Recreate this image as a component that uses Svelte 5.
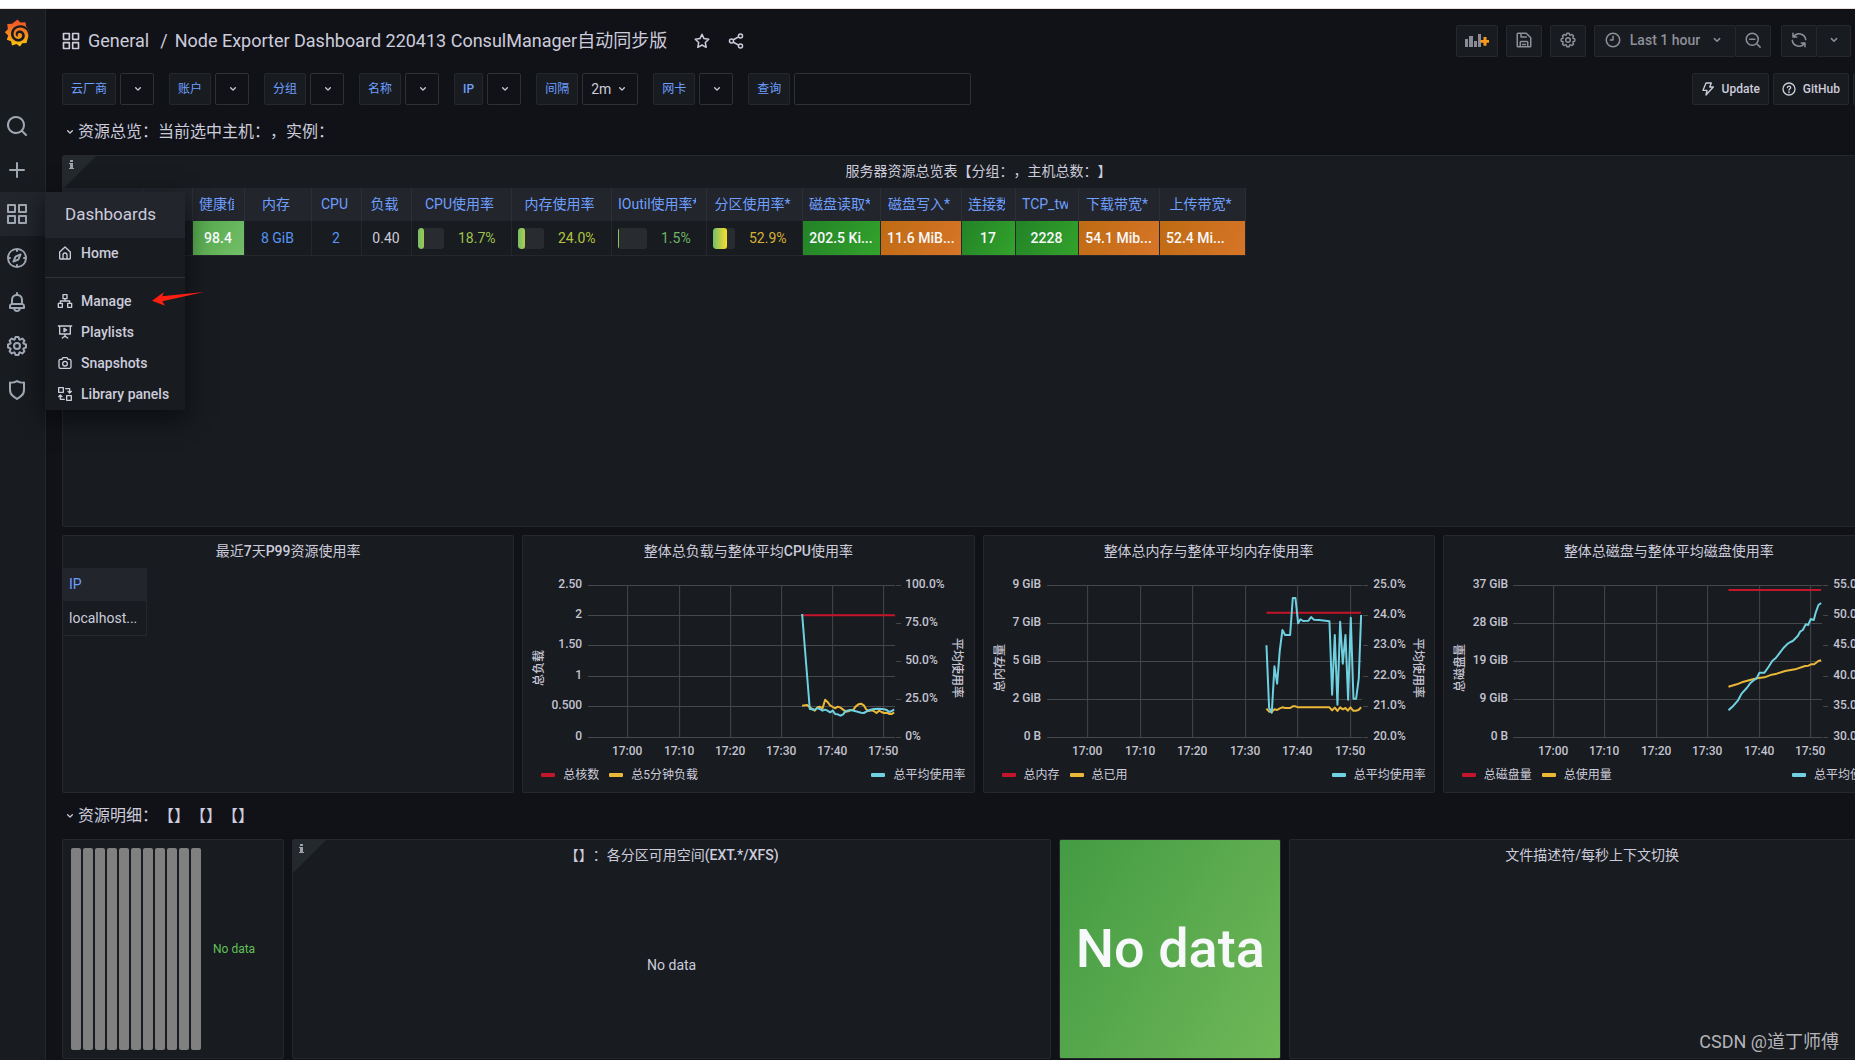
<script lang="ts">
  const icons: Record<string, string> = {
    search: 'M21.71,20.29,18,16.61A9,9,0,1,0,16.61,18l3.68,3.68a1,1,0,0,0,1.42,0A1,1,0,0,0,21.71,20.29ZM11,18a7,7,0,1,1,7-7A7,7,0,0,1,11,18Z',
    plus: 'M19,11H13V5a1,1,0,0,0-2,0v6H5a1,1,0,0,0,0,2h6v6a1,1,0,0,0,2,0V13h6a1,1,0,0,0,0-2Z',
    apps: 'M10,13H3a1,1,0,0,0-1,1v7a1,1,0,0,0,1,1h7a1,1,0,0,0,1-1V14A1,1,0,0,0,10,13ZM9,20H4V15H9ZM21,2H14a1,1,0,0,0-1,1v7a1,1,0,0,0,1,1h7a1,1,0,0,0,1-1V3A1,1,0,0,0,21,2ZM20,9H15V4h5Zm1,4H14a1,1,0,0,0-1,1v7a1,1,0,0,0,1,1h7a1,1,0,0,0,1-1V14A1,1,0,0,0,21,13Zm-1,7H15V15h5ZM10,2H3A1,1,0,0,0,2,3v7a1,1,0,0,0,1,1h7a1,1,0,0,0,1-1V3A1,1,0,0,0,10,2ZM9,9H4V4H9Z',
    compass: 'M12,2A10,10,0,1,0,22,12,10,10,0,0,0,12,2Zm1,17.93V19a1,1,0,0,0-2,0v.93A8,8,0,0,1,4.07,13H5a1,1,0,0,0,0-2H4.07A8,8,0,0,1,11,4.07V5a1,1,0,0,0,2,0V4.07A8,8,0,0,1,19.93,11H19a1,1,0,0,0,0,2h.93A8,8,0,0,1,13,19.93ZM15.14,7.55l-5,2.12a1,1,0,0,0-.52.52l-2.12,5a1,1,0,0,0,.21,1.1,1,1,0,0,0,.7.3.93.93,0,0,0,.4-.09l5-2.12a1,1,0,0,0,.52-.52l2.12-5a1,1,0,0,0-1.31-1.31Zm-2.49,5.1-2.28,1,1-2.28,2.28-1Z',
    bell: 'M18,13.18V10a6,6,0,0,0-5-5.91V3a1,1,0,0,0-2,0V4.09A6,6,0,0,0,6,10v3.18A3,3,0,0,0,4,16v2a1,1,0,0,0,1,1H8.14a4,4,0,0,0,7.72,0H19a1,1,0,0,0,1-1V16A3,3,0,0,0,18,13.18ZM8,10a4,4,0,0,1,8,0v3H8Zm4,10a2,2,0,0,1-1.72-1h3.44A2,2,0,0,1,12,20Zm6-3H6V16a1,1,0,0,1,1-1H17a1,1,0,0,1,1,1Z',
    cog: 'M21.32,9.55l-1.89-.63.89-1.78A1,1,0,0,0,20.13,6L18,3.87a1,1,0,0,0-1.15-.19l-1.78.89-.63-1.89A1,1,0,0,0,13.5,2h-3a1,1,0,0,0-.95.68L8.92,4.57,7.14,3.68A1,1,0,0,0,6,3.87L3.87,6a1,1,0,0,0-.19,1.15l.89,1.78-1.89.63A1,1,0,0,0,2,10.5v3a1,1,0,0,0,.68.95l1.89.63-.89,1.78A1,1,0,0,0,3.87,18L6,20.13a1,1,0,0,0,1.15.19l1.78-.89.63,1.89a1,1,0,0,0,.95.68h3a1,1,0,0,0,.95-.68l.63-1.89,1.78.89A1,1,0,0,0,18,20.13L20.13,18a1,1,0,0,0,.19-1.15l-.89-1.78,1.89-.63A1,1,0,0,0,22,13.5v-3A1,1,0,0,0,21.32,9.55ZM20,12.78l-1.2.4A2,2,0,0,0,17.64,16l.57,1.14-1.1,1.1L16,17.64a2,2,0,0,0-2.79,1.16l-.4,1.2H11.22l-.4-1.2A2,2,0,0,0,8,17.64l-1.14.57-1.1-1.1L6.36,16A2,2,0,0,0,5.2,13.18L4,12.78V11.22l1.2-.4A2,2,0,0,0,6.36,8L5.79,6.89l1.1-1.1L8,6.36A2,2,0,0,0,10.82,5.2l.4-1.2h1.56l.4,1.2A2,2,0,0,0,16,6.36l1.14-.57,1.1,1.1L17.64,8a2,2,0,0,0,1.16,2.79l1.2.4ZM12,8a4,4,0,1,0,4,4A4,4,0,0,0,12,8Zm0,6a2,2,0,1,1,2-2A2,2,0,0,1,12,14Z',
    shield: 'M19.63,3.65a1,1,0,0,0-.84-.2,8,8,0,0,1-6.22-1.27,1,1,0,0,0-1.14,0A8,8,0,0,1,5.21,3.45a1,1,0,0,0-.84.2A1,1,0,0,0,4,4.43v7.45a9,9,0,0,0,3.77,7.33l3.65,2.6a1,1,0,0,0,1.16,0l3.65-2.6A9,9,0,0,0,20,11.88V4.43A1,1,0,0,0,19.63,3.65ZM18,11.88a7,7,0,0,1-2.93,5.7L12,19.77,8.93,17.58A7,7,0,0,1,6,11.88V5.58a10,10,0,0,0,6-1.39,10,10,0,0,0,6,1.39Z'
  };

  const lineIcons: Record<string, string> = {
    down: 'M8.500 10.200l3.500 3.500 3.500-3.500',
    star: 'M12 3l2.7 5.8 6.3.8-4.6 4.4 1.2 6.4L12 17.3l-5.6 3.1L7.6 14 3 9.600l6.300-.8z',
    share: 'M15.400 6.400L8.600 10.300M8.600 13.700l6.800 3.900M18 2.500a2.700 2.700 0 1 1 0 5.400 2.700 2.700 0 0 1 0-5.400zM6 9.300a2.700 2.700 0 1 1 0 5.400 2.700 2.700 0 0 1 0-5.400zM18 16a2.700 2.700 0 1 1 0 5.400A2.700 2.700 0 0 1 18 16z',
    save: 'M4 3h11l6 6v11a1 1 0 0 1-1 1H4a1 1 0 0 1-1-1V4a1 1 0 0 1 1-1zM8 3v5h7M7 21v-6a1 1 0 0 1 1-1h8a1 1 0 0 1 1 1v6M10 18h4',
    clock: 'M12 3a9 9 0 1 1 0 18 9 9 0 0 1 0-18zM12 7v5H8.500',
    zoomOut: 'M11 3a8 8 0 1 1 0 16 8 8 0 0 1 0-16zM17 17l4.500 4.500M7.500 11h7',
    sync: 'M4 3v5h5M20 21v-5h-5M4.500 8A9 9 0 0 1 21 11.500M19.500 16A9 9 0 0 1 3 12.500',
    bolt: 'M9 3h8l-2.500 6H20L9 21l1.500-7H4.500z',
    help: 'M12 3a9 9 0 1 1 0 18 9 9 0 0 1 0-18zM9.600 9.800c.3-3 4.900-2.900 4.900 0 0 1.800-2.500 1.700-2.500 3.700M12 16v1.500',
    home: 'M4 10.500L12 3l8 7.500V20a1 1 0 0 1-1 1H5a1 1 0 0 1-1-1zM9 21v-6a3 3 0 0 1 6 0v6',
    sitemap: 'M9 2.500h6v6H9zM2 15.500h6v6H2zM16 15.500h6v6h-6zM12 8.500V12M5 15.500V12h14v3.500',
    playlists: 'M2 3h20M4 3v12h16V3M12 15v4M8 21l4-3 4 3M10.500 6.500v5L14.500 9z',
    camera: 'M7.500 6.500L9 4h6l1.500 2.500H19a2 2 0 0 1 2 2V18a2 2 0 0 1-2 2H5a2 2 0 0 1-2-2V8.500a2 2 0 0 1 2-2zM12 9.500a3.500 3.500 0 1 1 0 7 3.500 3.500 0 0 1 0-7z',
    library: 'M2.500 2.500h7v7h-7zM14.500 14.500h7v7h-7zM13 4h6v6M16.500 8L19 10.500 21.500 8M11 20H5v-6M2.500 16L5 13.500 7.500 16'
  };

  const nav = [
    ['search', 'Search'], ['plus', 'Create'], ['apps', 'Dashboards'], ['compass', 'Explore'],
    ['bell', 'Alerting'], ['cog', 'Configuration'], ['shield', 'Server admin']
  ];
  const menu = [
    ['sitemap', 'Manage'], ['playlists', 'Playlists'], ['camera', 'Snapshots'], ['library', 'Library panels']
  ];
  const filters = [
    ['云厂商', ''], ['账户', ''], ['分组', ''], ['名称', ''], ['IP', ''], ['间隔', '2m'], ['网卡', '']
  ];

  type Col = { w: number; h: string; v: string; kind?: string; bar?: number; fill?: number };
  const columns: Col[] = [
    { w: 80, h: '', v: '' },
    { w: 50, h: '', v: '' },
    { w: 52, h: '健康值', v: '98.4', kind: 'solid light' },
    { w: 67, h: '内存', v: '8 GiB', kind: 'blue' },
    { w: 50, h: 'CPU', v: '2', kind: 'blue' },
    { w: 50, h: '负载', v: '0.40' },
    { w: 100, h: 'CPU使用率', v: '18.7%', kind: 'lime', bar: 26, fill: 6 },
    { w: 100, h: '内存使用率', v: '24.0%', kind: 'olive', bar: 26, fill: 7 },
    { w: 95, h: 'IOutil使用率*', v: '1.5%', kind: 'leaf', bar: 29, fill: 1 },
    { w: 96, h: '分区使用率*', v: '52.9%', kind: 'amber', bar: 22, fill: 14 },
    { w: 78, h: '磁盘读取*', v: '202.5 Ki...', kind: 'solid green' },
    { w: 81, h: '磁盘写入*', v: '11.6 MiB...', kind: 'solid orange' },
    { w: 54, h: '连接数', v: '17', kind: 'solid green' },
    { w: 63, h: 'TCP_tw', v: '2228', kind: 'solid green' },
    { w: 81, h: '下载带宽*', v: '54.1 Mib...', kind: 'solid orange' },
    { w: 86, h: '上传带宽*', v: '52.4 Mi...', kind: 'solid orange start' }
  ];

  const five = [17, 55, 93, 131, 169];
  const six = [17, 47, 77, 108, 138, 169];
  const times = ['17:00', '17:10', '17:20', '17:30', '17:40', '17:50'];

  // Series points are kept in thirds of a pixel, offset by each chart's origin.
  const charts = [
    {
      title: '整体总负载与整体平均CPU使用率',
      left: '总负载', x0: 65, x1: 372, labelX: 59, rightX: 382, ox: -8,
      ys: six, yl: ['2.50', '2', '1.50', '1', '0.500', '0'],
      rs: five, rl: ['100.0%', '75.0%', '50.0%', '25.0%', '0%'],
      xs: [104, 156, 207, 258, 309, 360],
      legend: ['总核数', '总5分钟负载'],
      red: '861,256 1139,256',
      yellow: '861,527 876,525 884,532 899,542 907,532 914,530 922,536 930,509 937,516 945,526 953,531 960,535 968,530 976,533 984,539 992,545 999,544 1007,540 1015,539 1022,529 1030,523 1038,521 1046,526 1053,538 1061,543 1069,541 1076,543 1084,549 1092,542 1099,546 1107,549 1115,548 1122,552 1130,552 1137,547',
      cyan: '861,252 884,537 899,539 907,534 914,537 922,542 930,539 937,542 945,547 953,542 960,552 968,553 976,557 984,553 992,543 1007,540 1022,544 1038,548 1046,549 1061,541 1076,537 1092,536 1107,538 1115,540 1122,546 1130,543 1137,538'
    },
    {
      title: '整体总内存与整体平均内存使用率',
      left: '总内存量', x0: 63, x1: 378, labelX: 57, rightX: 389, ox: -9,
      ys: five, yl: ['9 GiB', '7 GiB', '5 GiB', '2 GiB', '0 B'],
      rs: six, rl: ['25.0%', '24.0%', '23.0%', '22.0%', '21.0%', '20.0%'],
      xs: [103, 156, 208, 261, 313, 366],
      legend: ['总内存', '总已用'],
      red: '874,248 1158,248',
      yellow: '874,536 882,545 890,545 898,538 906,540 914,535 922,532 930,534 945,534 953,529 961,529 969,532 1063,532 1071,541 1079,533 1087,543 1095,532 1103,538 1111,534 1118,542 1126,532 1134,542 1142,542 1150,540 1158,532',
      cyan: '874,346 882,534 890,548 898,409 906,461 914,361 922,300 930,315 945,315 953,204 961,204 969,280 976,268 984,273 1000,272 1008,261 1016,269 1032,270 1063,274 1071,494 1079,315 1087,524 1095,275 1103,401 1111,315 1119,509 1127,263 1135,506 1143,506 1151,445 1158,255'
    },
    {
      title: '整体总磁盘与整体平均磁盘使用率',
      left: '总磁盘量', x0: 69, x1: 378, labelX: 64, rightX: 389, ox: -9,
      ys: five, yl: ['37 GiB', '28 GiB', '19 GiB', '9 GiB', '0 B'],
      rs: six, rl: ['55.0%', '50.0%', '45.0%', '40.0%', '35.0%', '30.0%'],
      xs: [109, 160, 212, 263, 315, 366],
      legend: ['总磁盘量', '总使用量'],
      red: '880,180 1158,180',
      yellow: '880,470 905,463 920,457 945,450 965,445 988,442 1010,434 1025,431 1050,423 1080,418 1110,408 1120,407 1128,403 1137,403 1150,393 1158,391',
      cyan: '880,541 895,527 908,512 920,490 935,474 945,460 957,450 964,446 973,428 988,428 1000,411 1012,392 1022,384 1035,367 1045,354 1058,341 1066,336 1073,333 1088,318 1095,305 1103,300 1112,283 1119,285 1127,267 1136,270 1142,247 1150,225 1158,219'
    }
  ];

  const runs = (text: string) => text.split(/([A-Za-z0-9.*()\/]+)/).filter(Boolean);
</script>

{#snippet icon(name: string, size: number)}
  <svg class="icon" width={size} height={size} viewBox="0 0 24 24" aria-hidden="true">
    {#if icons[name]}
      <path d={icons[name]} fill="currentColor" />
    {:else}
      <path d={lineIcons[name]} fill="none" stroke="currentColor" stroke-width="2" stroke-linejoin="round" stroke-linecap="round" />
    {/if}
  </svg>
{/snippet}

{#snippet info()}
  <svg class="info" width="33" height="33" viewBox="0 0 33 33" aria-hidden="true">
    <path d="M0 0h33L0 33z" fill="#24292e" />
    <path d="M7 4h3v2H7zM6 7h4v5h1v1H6v-1h1V8H6z" fill="#9fa0a8" />
  </svg>
{/snippet}

{#snippet title(text: string)}
  <h3>{#each runs(text) as part}<span class:latin={/^[A-Za-z0-9(]/.test(part)}>{part}</span>{/each}</h3>
{/snippet}

<div class="strip"></div>
<div class="app">
  <nav class="side" aria-label="Main">
    <a class="logo" href="#home" aria-label="Grafana">
      <svg width="26" height="28" viewBox="0 0 26 28">
        <defs>
          <linearGradient id="flame" x1="0" y1="0" x2="0" y2="1">
            <stop offset="0" stop-color="#ef4e28" />
            <stop offset=".5" stop-color="#f58220" />
            <stop offset="1" stop-color="#fcc80e" />
          </linearGradient>
        </defs>
        <path fill="url(#flame)" fill-rule="evenodd" d="M13.500.5L16.500 3.500 21.500 3.200 22 7 25 12.500C24.500 10.500 22.500 7.500 19 6.500 12.500 4.800 7 9.200 7 14.700c0 4.600 3.500 7.800 7.600 7.800 3.500 0 6.200-2.600 6.200-5.800 0-3.300-2.500-5.300-5.200-5.300-2.200 0-3.900 1.500-3.900 3.500 0 1.500 1 2.600 2.500 2.900-.9-1.300-.8-3.800 1.500-3.800 1.600 0 2.500 1.200 2.500 2.600 0 2-1.700 3.300-3.700 3.300-2.900 0-4.900-2.200-4.900-5.100 0-3.600 2.900-6.400 6.700-6.400 4.800 0 8.100 3.600 8.100 8.100 0 1.300-.3 2.500-.8 3.600L22.500 24l-4.300.2-2.200 3.300-3.500-2.400-4.500 1.400-.9-4.200-4.300-1.500 1.400-4.200L.8 13.200l3-3L3.300 5l4.700-.3L10.300 3z" />
      </svg>
    </a>
    <ul>
      {#each nav as [name, label]}
        <li class:active={name === 'apps'}>
          <a href={'#' + name} aria-label={label}>{@render icon(name, 24)}</a>
          {#if name === 'apps'}
            <div class="flyout">
              <a class="head" href="#dashboards">Dashboards</a>
              <a class="item" href="#home">{@render icon('home', 16)}Home</a>
              <hr />
              {#each menu as [ic, text]}
                <a class="item" href={'#' + ic}>{@render icon(ic, 16)}{text}</a>
              {/each}
              <svg class="arrow" width="52" height="14" viewBox="0 0 156 42" aria-hidden="true">
                <path d="M0 26L35 1 31 13 156 0 31 28 39 41z" fill="#fe1f12" />
              </svg>
            </div>
          {/if}
        </li>
      {/each}
    </ul>
  </nav>

  <main>
    <header>
      <h1>
        {@render icon('apps', 20)}
        <a href="#general">General</a><span>/</span><a href="#dashboard">Node Exporter Dashboard 220413 ConsulManager自动同步版</a>
      </h1>
      <button class="bare" aria-label="Mark as favorite">{@render icon('star', 18)}</button>
      <button class="bare" aria-label="Share dashboard">{@render icon('share', 18)}</button>
      <div class="tools">
        <button class="tool wide" aria-label="Add panel">
          <svg width="24" height="15" viewBox="0 0 24 15" aria-hidden="true">
            <path d="M0 6h3v8H0zM4 3h4v11H4zM9 8h3v6H9zM13 1h3v13h-3z" fill="#8a8b94" />
            <path d="M18.500 4h3v3h3v2.800h-3v3h-3v-3h-3V7h3z" fill="#fa9a1c" />
          </svg>
        </button>
        <button class="tool" aria-label="Save dashboard">{@render icon('save', 18)}</button>
        <button class="tool" aria-label="Dashboard settings">{@render icon('cog', 18)}</button>
        <div class="joined">
          <button class="tool time">{@render icon('clock', 18)}<span>Last 1 hour</span>{@render icon('down', 18)}</button>
          <button class="tool" aria-label="Zoom out">{@render icon('zoomOut', 18)}</button>
        </div>
        <div class="joined last">
          <button class="tool" aria-label="Refresh">{@render icon('sync', 18)}</button>
          <button class="tool narrow" aria-label="Refresh interval">{@render icon('down', 18)}</button>
        </div>
      </div>
    </header>

    <div class="canvas">
      <div class="filters">
        {#each filters as [label, value], i}
          <div class="filter">
            <label for={'filter' + i} class:latin={label === 'IP'}>{label}</label>
            <div class="pick" class:filled={value}>
              <select id={'filter' + i}><option>{value}</option></select>
              {@render icon('down', 16)}
            </div>
          </div>
        {/each}
        <div class="filter">
          <label for="query">查询</label>
          <input id="query" type="text" />
        </div>
        <div class="links">
          <a href="#update">{@render icon('bolt', 16)}Update</a>
          <a href="#github">{@render icon('help', 16)}GitHub</a>
          <a class="more" href="#more" aria-label="More links"></a>
        </div>
      </div>

      <h2>{@render icon('down', 16)}资源总览：当前选中主机：，实例：</h2>

      <div class="grid">
        <section class="panel full">
          {@render info()}
          {@render title('服务器资源总览表【分组：，主机总数：】')}
          <table class="overview">
            <colgroup>
              {#each columns as c}<col style:width={c.w + 'px'} />{/each}
            </colgroup>
            <thead>
              <tr>{#each columns as c}<th><div class="name">{c.h}</div></th>{/each}</tr>
            </thead>
            <tbody>
              <tr>
                {#each columns as c}
                  <td class={c.kind}>
                    {#if c.bar}
                      <div class="gauge">
                        <span class="track" style:width={c.bar + 'px'}><span class="level" style:width={c.fill + 'px'}></span></span>
                        {c.v}
                      </div>
                    {:else}{c.v}{/if}
                  </td>
                {/each}
              </tr>
            </tbody>
          </table>
        </section>

        <section class="panel quarter">
          {@render title('最近7天P99资源使用率')}
          <table class="hosts">
            <thead><tr><th>IP</th></tr></thead>
            <tbody><tr><td>localhost...</td></tr></tbody>
          </table>
        </section>

        {#each charts as c}
          <section class="panel quarter">
            {@render title(c.title)}
            <svg class="chart" viewBox="0 0 450 196" role="img" aria-label={c.title}>
              <g class="lines">
                {#each c.ys as y}<path d={`M${c.x0} ${y + 0.5}H${c.x1}`} />{/each}
                {#each c.rs as y}<path d={`M${c.x1 + 1} ${y + 0.5}h5`} />{/each}
                {#each c.xs as x}<path d={`M${x + 0.5} 17V169`} />{/each}
              </g>
              <g transform={`translate(${c.ox} -38) scale(0.33333)`} class="series">
                <polyline points={c.red} stroke="#c4162a" />
                <polyline points={c.yellow} stroke="#eab839" />
                <polyline points={c.cyan} stroke="#6ed0e0" />
              </g>
              {#each c.ys as y, i}<text x={c.labelX} y={y + 3} text-anchor="end">{c.yl[i]}</text>{/each}
              {#each c.rs as y, i}<text x={c.rightX} y={y + 3}>{c.rl[i]}</text>{/each}
              {#each c.xs as x, i}<text {x} y="187" text-anchor="middle">{times[i]}</text>{/each}
              <text transform="translate(20 100) rotate(-90)" text-anchor="middle">{c.left}</text>
              <text transform="translate(430 100) rotate(90)" text-anchor="middle">平均使用率</text>
            </svg>
            <div class="legend">
              <span class="key red">{c.legend[0]}</span>
              <span class="key yellow">{c.legend[1]}</span>
              <span class="key cyan">总平均使用率</span>
            </div>
          </section>
        {/each}
      </div>

      <h2>{@render icon('down', 16)}资源明细：【】【】【】</h2>

      <div class="grid">
        <section class="panel three bars">
          <div class="cells">{#each Array(11) as _}<i></i>{/each}</div>
          <span>No data</span>
        </section>
        <section class="panel ten">
          {@render info()}
          {@render title('【】：各分区可用空间(EXT.*/XFS)')}
          <p class="empty">No data</p>
        </section>
        <section class="panel three stat">No data</section>
        <section class="panel eight">{@render title('文件描述符/每秒上下文切换')}</section>
      </div>
    </div>
  </main>
  <div class="mark">CSDN @道丁师傅</div>
</div>

<style>
  :global(body) {
    background: #111217;
    overflow: hidden;
  }
  .strip {
    height: 8px;
    background: #fff;
    border-bottom: 1px solid #e6e0d8;
  }
  .app {
    position: relative;
    display: flex;
    min-height: calc(100vh - 9px);
    color: #ccccdc;
    font: 14px/20px Roboto, "Noto Sans CJK SC", sans-serif;
    text-spacing-trim: space-all;
  }
  .app *, .app { box-sizing: border-box; }
  a { color: inherit; text-decoration: none; }
  button, select, input { font: inherit; color: inherit; margin: 0; }
  .icon { flex: none; display: block; }

  .side {
    width: 46px;
    flex: none;
    background: #181b1f;
    border-right: 1px solid #25272c;
    z-index: 2;
  }
  .logo { display: block; padding: 10px 0 0 4px; height: 95px; }
  ul { list-style: none; margin: 0; padding: 0; }
  li { position: relative; height: 44px; color: #9fa7b3; }
  li > a { display: flex; align-items: center; height: 44px; padding-left: 5px; }
  li.active { background: #22252b; }
  .flyout {
    position: absolute;
    left: 45px;
    top: 0;
    width: 140px;
    background: #181b1f;
    box-shadow: 0 8px 24px rgba(1, 4, 9, 0.6);
    color: #ccccdc;
    font-weight: 500;
  }
  .head {
    display: block;
    background: #22252b;
    padding: 11px 20px 13px;
    font-size: 17px;
    line-height: 22px;
    font-weight: 400;
  }
  .item { display: flex; align-items: center; gap: 8px; height: 31px; padding: 0 0 2px 12px; white-space: nowrap; }
  hr { border: 0; border-top: 1px solid #303238; margin: 8px 0; }
  .arrow { position: absolute; left: 107px; top: 100px; }

  main { flex: 1; min-width: 0; padding: 16px 0 0 16px; overflow: hidden; }
  header { display: flex; align-items: center; height: 32px; margin-right: 4px; }
  h1 {
    display: flex;
    align-items: center;
    margin: 0 18px 0 -1px;
    font-size: 18px;
    line-height: 32px;
    font-weight: 400;
    white-space: nowrap;
  }
  h1 a { margin-left: 7px; }
  h1 span { margin-left: 11px; }
  .bare { background: none; border: 0; padding: 8px; display: flex; }
  .tools { display: flex; gap: 8px; margin-left: auto; color: #8e8f99; font-weight: 500; }
  .tool {
    display: flex;
    align-items: center;
    justify-content: center;
    width: 36px;
    height: 32px;
    padding: 0 0 2px;
    background: #181b1f;
    border: 1px solid #26282e;
    border-radius: 2px;
  }
  .tool.wide { width: 42px; }
  .tool.narrow { width: 35px; }
  .tool.time { width: 142px; gap: 8px; }
  .joined { display: flex; }
  .joined .tool + .tool { margin-left: -1px; }
  .joined.last { margin-left: 2px; }

  .canvas { margin-right: -40px; }
  .filters { display: flex; gap: 15px; margin: 16px 0 12px; }
  .filter { display: flex; gap: 4px; }
  .filter label, .links a {
    display: flex;
    align-items: center;
    height: 32px;
    padding: 0 8px;
    background: #181b1f;
    border: 1px solid #25272c;
    border-radius: 2px;
    font-size: 12px;
    white-space: nowrap;
  }
  .links a, .latin { font-weight: 500; }
  .filter label { color: #6e9fff; }
  .pick { position: relative; width: 34px; height: 32px; }
  .pick.filled { width: 56px; }
  .pick select {
    appearance: none;
    width: 100%;
    height: 100%;
    padding: 0 8px;
    background: #111217;
    border: 1px solid #2e3036;
    border-radius: 2px;
  }
  .pick .icon { position: absolute; right: 8px; top: 8px; pointer-events: none; }
  .filter input {
    width: 177px;
    height: 32px;
    padding: 0 8px;
    background: #111217;
    border: 1px solid #2e3036;
    border-radius: 2px;
  }
  .links { display: flex; gap: 4px; margin-left: auto; }
  .links a { gap: 6px; padding: 0 8px 0 7px; }
  .links .more { width: 42px; }

  h2 {
    display: flex;
    align-items: center;
    height: 30px;
    margin: 0 0 8px;
    font-size: 16px;
    font-weight: 400;
  }
  .grid {
    display: grid;
    grid-template-columns: repeat(24, minmax(0, 1fr));
    gap: 8px;
    margin-bottom: 8px;
  }
  .panel {
    position: relative;
    background: #181b1f;
    border: 1px solid #25272c;
    border-radius: 2px;
    overflow: hidden;
  }
  .full { grid-column: span 24; height: 372px; }
  .quarter { grid-column: span 6; height: 258px; }
  .three { grid-column: span 3; height: 220px; }
  .ten { grid-column: span 10; }
  .eight { grid-column: span 8; }
  .info { position: absolute; left: 0; top: 0; }
  h3 { margin: 0; padding-bottom: 2px; font-size: 14px; line-height: 30px; font-weight: 400; text-align: center; }

  table { border-collapse: separate; border-spacing: 0; table-layout: fixed; }
  .overview { width: 1183px; }
  .hosts { width: 84px; }
  th, td {
    border-right: 1px solid #25272c;
    overflow: hidden;
    white-space: nowrap;
    text-align: center;
    font-weight: 400;
  }
  th { height: 33px; padding: 0 10px 2px 6px; background: #22252b; color: #6e9fff; border-right-color: #2c2f36; }
  td { height: 35px; padding: 0 7px 0 6px; border-bottom: 1px solid #25272c; }
  .name { overflow: hidden; }
  .hosts th, .hosts td { text-align: left; }
  .hosts th { border-right-color: #22252b; }
  .hosts td { padding-right: 0; }
  .blue { color: #5794f2; }
  .lime { color: #9ec24f; }
  .olive { color: #b3c43f; }
  .leaf { color: #6db765; }
  .amber { color: #d9b136; }
  .solid { color: #f7f8fa; font-weight: 500; }
  .light { background: linear-gradient(120deg, #52a64a, #73bf69); }
  .green { background: linear-gradient(120deg, #238227, #33a32c); }
  .orange { background: linear-gradient(120deg, #be6b13, #d77528); }
  .start { text-align: left; }
  .gauge { display: flex; align-items: center; gap: 14px; }
  .track { height: 21px; background: #282b30; border-radius: 3px; overflow: hidden; }
  .level { display: block; height: 100%; border-radius: 3px; background: linear-gradient(90deg, #73bf69, #9fc951); }
  .olive .level { background: linear-gradient(90deg, #73bf69, #afd04a); }
  .amber .level { background: linear-gradient(90deg, #73bf69, #fade2a); }

  .chart { display: block; width: 100%; height: 196px; }
  .chart text { font-size: 12px; font-weight: 500; fill: #c4c4d2; }
  .lines path { stroke: #45474b; fill: none; }
  .series polyline { fill: none; stroke-width: 6; stroke-linejoin: round; }
  .legend { display: flex; gap: 10px; padding: 0 8px 0 18px; font-size: 12px; line-height: 22px; }
  .key { display: flex; align-items: center; gap: 8px; white-space: nowrap; }
  .key::before { content: ""; width: 14px; height: 4px; border-radius: 1px; background: currentColor; }
  .key.red::before { background: #c4162a; }
  .key.yellow::before { background: #eab839; }
  .key.cyan::before { background: #6ed0e0; }
  .key.cyan { margin-left: auto; }

  .bars { display: flex; align-items: center; gap: 12px; padding: 8px; color: #62c159; font-size: 12px; }
  .cells { display: flex; gap: 2px; height: 100%; }
  .cells i { width: 10px; background: #808080; border-radius: 2px; }
  .empty { margin: 0; height: 186px; display: flex; align-items: center; justify-content: center; }
  .stat {
    display: flex;
    align-items: center;
    justify-content: center;
    background: linear-gradient(120deg, #439b43, #70b858);
    color: #f7f8fa;
    font-size: 54px;
    font-weight: 500;
    white-space: nowrap;
  }
  .mark {
    position: absolute;
    right: 16px;
    bottom: 13px;
    font-size: 18px;
    line-height: 24px;
    color: #b4b4b8;
  }
</style>
